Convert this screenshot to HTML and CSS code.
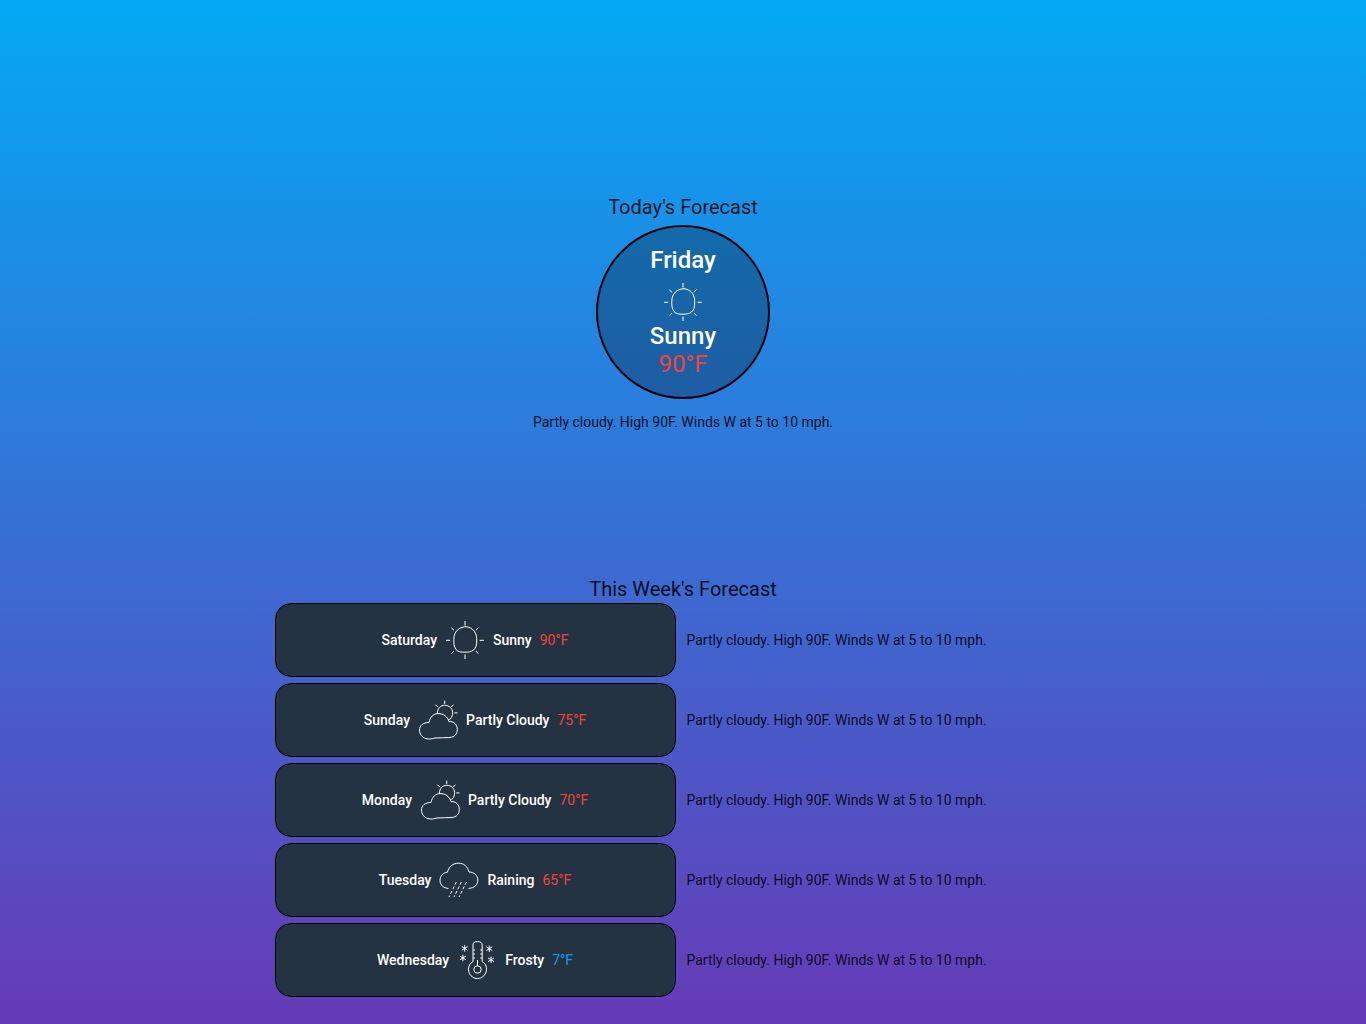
FILE: index.html
```html
<!DOCTYPE html>
<html lang="en">
<head>
<meta charset="utf-8">
<meta name="viewport" content="width=device-width, initial-scale=1">
<title>Weather Forecast</title>
<link rel="stylesheet" href="styles.css">
</head>
<body>
<svg class="sprite" aria-hidden="true">
  <symbol id="sun" viewBox="0 0 40 40">
    <path d="M20 6.600C24.500 6.800 27.500 8.800 29.500 11.500C31.600 14.500 31.800 18 31.700 21C31.700 25 31 28 28.500 30C26 32 23 32.200 20 32.200C16 32.200 13 32 11 29.500C8.800 26.500 8.700 23 8.800 19.500C8.900 15 10 12.500 12.500 10C14.500 8 17 7.200 20.500 6.600M20 1v4.500M20 34.500V39M1 20.300H5.200M34.700 20.300H38.900M6.300 7.800L9 10.300M33.400 7.600L30.800 10.300M6.500 33.600L9 31M33.400 33.600L30.800 31"/>
  </symbol>
  <symbol id="partly-cloudy" viewBox="0 0 40 40">
    <path d="M11 22.500C12 17 15.500 13.600 20 13.600C25.500 13.500 29.500 16.500 31 21.600C36 21 39.400 25 39.300 29.500C39.300 34 36.500 37 32 37.500C27 38 22 37.500 17 38C14 38.800 11 39.500 8 38.600C4 37.500 1.500 34 1.500 30C1.500 25.500 5 22.500 11 22.500M19.300 13.600C19.500 8.500 22.500 5.300 26.700 5.300C31.500 5.300 34.500 8.500 34.600 12.500C34.700 15 34 17 32.500 18.800L30.500 19.700M26.700.6V4M17.400 4.700L20 7.300M35.400 4.700L33 7.300M36.300 12.900H39.500"/>
  </symbol>
  <symbol id="rain" viewBox="0 0 40 40">
    <path d="M9.500 28.400C4.500 28.200 1 25 1 20.500C1 16 4 12.800 8.400 12.200C10 6.500 14 3.200 19.400 3.200C24.800 3.200 28.500 6.300 30 12C35 12 38.800 15.500 38.800 20C38.800 25 35.500 28 29.500 28.400"/>
    <path stroke-dasharray="3 2" d="M17.300 22L10 37M22.400 22L15 37M27.500 22L20 37"/>
  </symbol>
  <symbol id="frost" viewBox="0 0 40 40">
    <path d="M16 21.500V5C16 2.500 17.500 1.600 20.500 1.600C23.500 1.600 25.200 2.500 25.200 5V21.500C31.500 25 30.500 34 25 37.300C22 39 18.500 39 15.800 37.300C10 33.500 10 25 16 21.500M16 10H18M16 14H18M16 18H18M23.200 10H25.200M23.200 14H25.200M23.200 18H25.200M20.500 20V25.800"/>
    <circle cx="20.500" cy="29.500" r="3.700"/>
    <path d="M7.700 5.200V11.600M4.800 6.600L10.600 10.200M10.600 6.600L4.800 10.200M5.900 14.800V21.200M3 16.200L8.800 19.800M8.800 16.200L3 19.800M32.300 5.500V11.900M29.400 6.900L35.200 10.500M35.200 6.900L29.400 10.500M34 16.600V23M31.100 18L36.900 21.600M36.900 18L31.100 21.600"/>
  </symbol>
</svg>
<main class="page">
  <section class="today">
    <h1 class="heading">Today's Forecast</h1>
    <article class="today-card">
      <h2 class="today-day">Friday</h2>
      <svg class="icon" role="img" aria-label="Sunny"><use href="#sun"/></svg>
      <p class="today-condition">Sunny</p>
      <p class="today-temp hot">90°F</p>
    </article>
    <p class="detail">Partly cloudy. High 90F. Winds W at 5 to 10 mph.</p>
  </section>
  <section class="week">
    <h1 class="heading">This Week's Forecast</h1>
    <ul class="days">
      <li class="day">
        <div class="day-card"><h2 class="label">Saturday</h2><svg class="icon" aria-hidden="true"><use href="#sun"/></svg><p class="label">Sunny</p><p class="temp hot">90°F</p></div>
        <p class="detail">Partly cloudy. High 90F. Winds W at 5 to 10 mph.</p>
      </li>
      <li class="day">
        <div class="day-card"><h2 class="label">Sunday</h2><svg class="icon" aria-hidden="true"><use href="#partly-cloudy"/></svg><p class="label">Partly Cloudy</p><p class="temp hot">75°F</p></div>
        <p class="detail">Partly cloudy. High 90F. Winds W at 5 to 10 mph.</p>
      </li>
      <li class="day">
        <div class="day-card"><h2 class="label">Monday</h2><svg class="icon" aria-hidden="true"><use href="#partly-cloudy"/></svg><p class="label">Partly Cloudy</p><p class="temp hot">70°F</p></div>
        <p class="detail">Partly cloudy. High 90F. Winds W at 5 to 10 mph.</p>
      </li>
      <li class="day">
        <div class="day-card"><h2 class="label">Tuesday</h2><svg class="icon" aria-hidden="true"><use href="#rain"/></svg><p class="label">Raining</p><p class="temp hot">65°F</p></div>
        <p class="detail">Partly cloudy. High 90F. Winds W at 5 to 10 mph.</p>
      </li>
      <li class="day">
        <div class="day-card"><h2 class="label">Wednesday</h2><svg class="icon" aria-hidden="true"><use href="#frost"/></svg><p class="label">Frosty</p><p class="temp cold">7°F</p></div>
        <p class="detail">Partly cloudy. High 90F. Winds W at 5 to 10 mph.</p>
      </li>
    </ul>
  </section>
</main>
</body>
</html>
```
FILE: styles.css
```css
* {
  box-sizing: border-box;
  margin: 0;
  padding: 0;
}

body {
  font-family: Roboto, "Liberation Sans", sans-serif;
  font-size: 14px;
  line-height: 20px;
  color: rgba(0, 0, 0, 0.87);
}

.sprite {
  display: none;
}

.page {
  display: flex;
  flex-direction: column;
  gap: 143px;
  min-height: 100vh;
  padding: 193px 16px 24px;
  background: linear-gradient(to bottom, #03a9f4, #673ab7);
}

.today,
.week {
  display: flex;
  flex-direction: column;
  align-items: center;
}

.heading {
  font-size: 20px;
  font-weight: 400;
  line-height: 28px;
}

.icon {
  flex: none;
  width: 40px;
  height: 40px;
  fill: none;
  stroke: #fff;
  stroke-width: 1;
}

.today-card {
  display: flex;
  flex-direction: column;
  align-items: center;
  justify-content: center;
  width: 174px;
  height: 174px;
  margin: 4px 0 13px;
  border: 2px solid #000;
  border-radius: 50%;
  background: rgba(0, 0, 0, 0.26);
  color: #fff;
  font-size: 24px;
  line-height: 28px;
}

.today-day,
.today-condition {
  font-size: 24px;
  font-weight: 500;
}

.today-day {
  margin-bottom: 8px;
}

.week {
  width: 100%;
}

.days {
  display: flex;
  flex-direction: column;
  gap: 6px;
  width: 100%;
  max-width: 817px;
  list-style: none;
}

.day {
  display: grid;
  grid-template-columns: minmax(0, 401px) 1fr;
  align-items: center;
  gap: 11px;
}

.day-card {
  display: flex;
  align-items: center;
  justify-content: center;
  gap: 8px;
  padding: 16px;
  border: 1px solid #000;
  border-radius: 16px;
  background: #243342;
  color: #fff;
}

.label {
  font-size: 14px;
  font-weight: 500;
}

.hot {
  color: #f44336;
}

.cold {
  color: #2196f3;
}
```
